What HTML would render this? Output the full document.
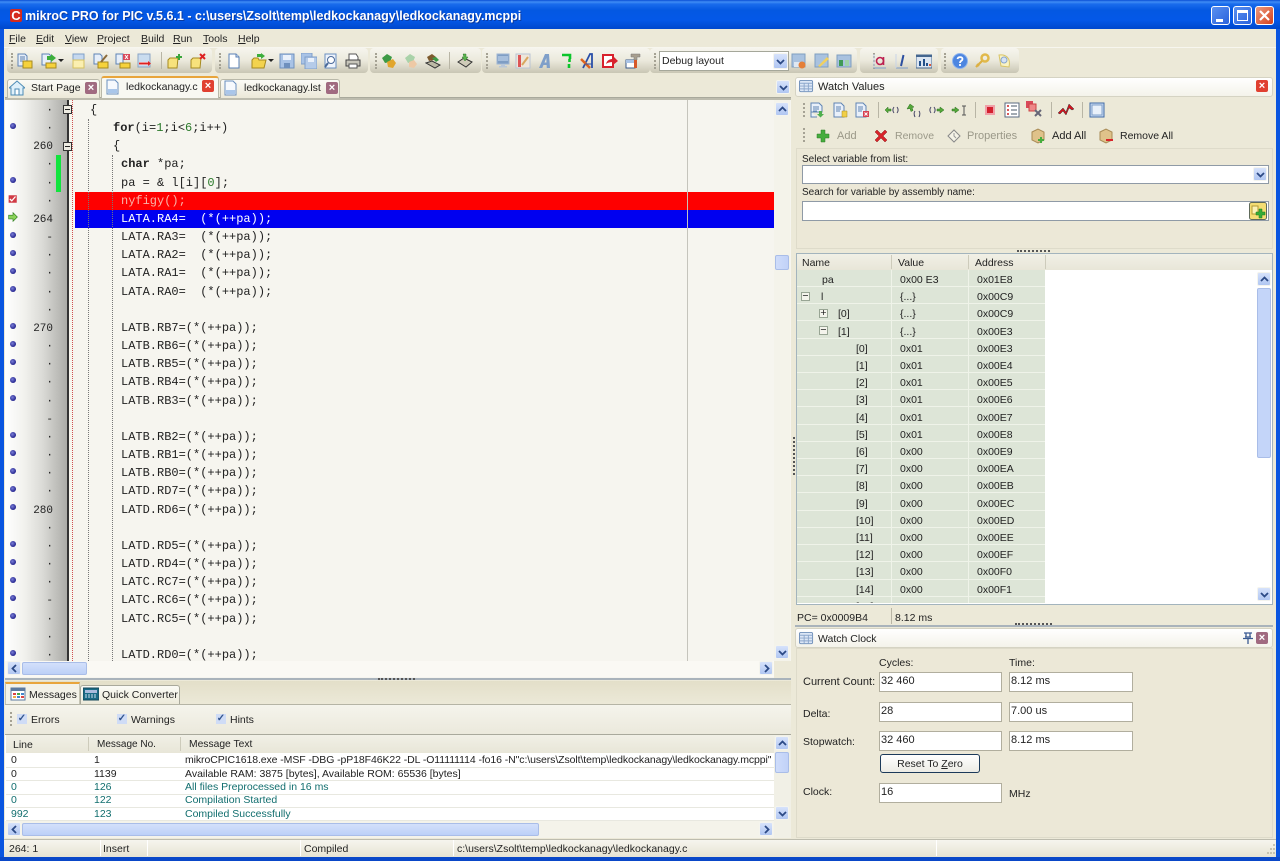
<!DOCTYPE html>
<html><head><meta charset="utf-8"><title>mikroC PRO for PIC</title>
<style>
html,body{margin:0;padding:0;width:1280px;height:861px;overflow:hidden;background:#ece9d8}
body{position:relative;font:10.5px/14px "Liberation Sans",sans-serif;color:#222}
div,span.t,svg.i{position:absolute}
.t{position:absolute;white-space:pre}
.tb{height:25px;top:48px;background:linear-gradient(#f6f5ee,#ebe9dc 50%,#c9c6b4);border-radius:4px}
.grip{width:2px;height:16px;border-left:2px dotted #a5a294}
.sep{width:1px;background:#b8b5a5}
svg.i{width:16px;height:16px}
.c{position:absolute;left:121px;height:18px;font:12px/18px "Liberation Mono",monospace;white-space:pre;color:#222}
.n{color:#2b7a2b}
.ln{position:absolute;font:11px/18px "Liberation Mono",monospace;color:#222;white-space:pre;text-align:right;width:30px;left:23px;margin-top:1px}
.bd{position:absolute;left:10px;width:6px;height:6px;border-radius:50%;background:radial-gradient(circle at 40% 40%,#7a7ed8,#24248e 70%)}
.sb{position:absolute;width:14px;height:14px;background:linear-gradient(#d6e2fb,#b0c6f2);border:1px solid #f4f4ee;box-sizing:border-box;border-radius:2px}
.sb svg{position:absolute;left:2px;top:2px;width:9px;height:9px}
.th{position:absolute;background:linear-gradient(90deg,#cfdcfa,#c1d2f8);border:1px solid #a9bde8;box-sizing:border-box;border-radius:2px}
.thh{position:absolute;background:linear-gradient(#d3e0fb,#bcd0f7);border:1px solid #a9bde8;box-sizing:border-box;border-radius:2px}
.tx{position:absolute;white-space:pre;line-height:16px;margin-top:1px}
.e{position:absolute;background:#fff;border:1px solid #b1ae9e;box-sizing:border-box;padding:0 1px;line-height:16px;font-size:11px;color:#222}
.m{position:absolute;height:13px;line-height:13px;white-space:pre}
.g{color:#116e6e}
.x{position:absolute;width:12px;height:12px;border-radius:2px;background:#d9495a;color:#fff;font:bold 11px/12px "Liberation Sans",sans-serif;text-align:center}
.f11{font-size:11px}
</style></head><body>
<svg width="0" height="0" style="position:absolute">
<defs>
<symbol id="up" viewBox="0 0 9 9"><path d="M1 6l3.5-3.5L8 6" fill="none" stroke="#2c4a86" stroke-width="1.8"/></symbol>
<symbol id="dn" viewBox="0 0 9 9"><path d="M1 3l3.5 3.5L8 3" fill="none" stroke="#2c4a86" stroke-width="1.8"/></symbol>
<symbol id="lf" viewBox="0 0 9 9"><path d="M6 1L2.500 4.500 6 8" fill="none" stroke="#2c4a86" stroke-width="1.8"/></symbol>
<symbol id="rt" viewBox="0 0 9 9"><path d="M3 1l3.500 3.500L3 8" fill="none" stroke="#2c4a86" stroke-width="1.800"/></symbol>
<symbol id="doc" viewBox="0 0 16 16"><path d="M2 1h8l3 3v11H2z" fill="#f6f9fd" stroke="#6a8fbf"/><path d="M3 10h9v4H3z" fill="#a9c6ea"/></symbol>
<symbol id="dy" viewBox="0 0 16 16"><path d="M1 1h7l2 2v10H1z" fill="#e6eef9" stroke="#5f84b5"/><path d="M3 4h5M3 6h5M3 8h5" stroke="#5a7fb0"/><path d="M6 8h9v7H6z" fill="#f6d23c" stroke="#a68a20"/></symbol>
<symbol id="dg" viewBox="0 0 16 16"><path d="M1 1h7l2 2v9H1z" fill="#e6eef9" stroke="#5f84b5"/><path d="M5 10h10v5H5z" fill="#f6d23c" stroke="#a68a20"/><path d="M6 3h4V1l5 4-5 4V7H6z" fill="#3cae3c"/></symbol>
<symbol id="dl" viewBox="0 0 16 16"><path d="M2 1h11v6H2z" fill="#c5d8ef" stroke="#7fa0c8"/><path d="M2 7h11v8H2z" fill="#fbefb0" stroke="#d6c060"/></symbol>
<symbol id="dc" viewBox="0 0 16 16"><path d="M1 1h6l2 2v8H1z" fill="#e6eef9" stroke="#5f84b5"/><path d="M5 9h10v6H5z" fill="#f6d23c" stroke="#a68a20"/><path d="M8 9l6-7" stroke="#8a6a3a" stroke-width="2"/></symbol>
<symbol id="dx" viewBox="0 0 16 16"><path d="M1 1h7v10H1z" fill="#e6eef9" stroke="#5f84b5"/><path d="M8 1h7v6H8z" fill="#d9495a"/><path d="M10 2l3 4m0-4l-3 4" stroke="#fff"/><path d="M5 10h10v5H5z" fill="#f6d23c" stroke="#a68a20"/></symbol>
<symbol id="ex" viewBox="0 0 16 16"><path d="M2 1h12v13H2z" fill="#c9dcef" stroke="#8aa5c5"/><path d="M3 9h10v3H3z" fill="#fff"/><path d="M3 10.500h9" stroke="#d22" stroke-width="2"/><path d="M12 8l3 2.500-3 2.500z" fill="#d22"/></symbol>
<symbol id="fa" viewBox="0 0 16 16"><path d="M1 7l2-2h8l-1 10H1z" fill="#f7e27c" stroke="#a68a20"/><path d="M12 1v6M9 4h6" stroke="#3aa63a" stroke-width="2"/></symbol>
<symbol id="fx" viewBox="0 0 16 16"><path d="M1 7l2-2h8l-1 10H1z" fill="#f7e27c" stroke="#a68a20"/><path d="M10 1l5 5m0-5l-5 5" stroke="#d22" stroke-width="2"/></symbol>
<symbol id="nw" viewBox="0 0 16 16"><path d="M3 1h7l3 3v11H3z" fill="#fff" stroke="#5a80b5"/><path d="M10 1v3h3" fill="#d5e2f3" stroke="#5a80b5"/></symbol>
<symbol id="op" viewBox="0 0 16 16"><path d="M1 7l2-2h4l1 2h7l-2 8H1z" fill="#f3d34e" stroke="#a68a20"/><path d="M6 1h4V0l4 3-4 3V4H6z" fill="#3cae3c"/></symbol>
<symbol id="sv" viewBox="0 0 16 16"><path d="M1 1h14v14H1z" fill="#a9c3e6" stroke="#6f90bd"/><path d="M4 2h8v5H4z" fill="#eaf1fb"/><path d="M5 10h6v5H5z" fill="#6f90bd"/></symbol>
<symbol id="sa" viewBox="0 0 16 16"><path d="M0 0h11v11H0z" fill="#a9c3e6" stroke="#7f9fc9"/><path d="M4 4h12v12H4z" fill="#b5cbe9" stroke="#7f9fc9"/><path d="M7 5h6v4H7z" fill="#eaf1fb"/></symbol>
<symbol id="pv" viewBox="0 0 16 16"><path d="M2 1h11v14H2z" fill="#eef3fb" stroke="#6a8fbf"/><circle cx="8" cy="7" r="3.500" fill="#fff" stroke="#4a6a9a"/><path d="M5 10l-3 4" stroke="#4a6a9a" stroke-width="2"/></symbol>
<symbol id="pr" viewBox="0 0 16 16"><path d="M4 1h7l2 3v3H4z" fill="#fff" stroke="#555"/><path d="M1 7h14v6H1z" fill="#c8c6bb" stroke="#444"/><path d="M4 11h8v4H4z" fill="#fff" stroke="#555"/></symbol>
<symbol id="bg" viewBox="0 0 16 16"><path d="M1 5l5-4 5 3-2 5-5 1z" fill="#3d9a45"/><path d="M6 9l6-3 3 4-3 5-5-1z" fill="#e1a62d"/></symbol>
<symbol id="bl" viewBox="0 0 16 16"><path d="M2 5l5-4 5 3-2 5-5 1z" fill="#a9d2a9"/><path d="M6 9l5-2 3 4-3 4-5-1z" fill="#eec9a5"/></symbol>
<symbol id="bc" viewBox="0 0 16 16"><path d="M2 4l5-3 4 3-2 3-5 1z" fill="#7d5a2d"/><path d="M7 5l4-1 3 3-3 2z" fill="#3d9a45"/><path d="M1 10l6-2 8 4-5 3z" fill="#bdb9a5" stroke="#333"/></symbol>
<symbol id="pg" viewBox="0 0 16 16"><path d="M1 9l6-4 8 4-6 5z" fill="#cfcbb8" stroke="#333"/><path d="M6 1h3v3h2l-3 4-3-4h2z" fill="#5ab44c" stroke="#2f7a2a" stroke-width=".5"/></symbol>
<symbol id="mn" viewBox="0 0 16 16"><path d="M2 1h12v10H2z" fill="#7f9ec4" stroke="#9fb6d4"/><path d="M3 3h10v5H3z" fill="#a7bfdc"/><path d="M6 11h4v2H6zM4 13h8v1.500H4z" fill="#b9c7d8"/></symbol>
<symbol id="lb" viewBox="0 0 16 16"><path d="M1 1h14v14H1z" fill="#eee6da" stroke="#b9c4d4"/><path d="M3 2h3v12H3z" fill="#d55"/><path d="M7 12l6-8" stroke="#d9a760" stroke-width="2"/></symbol>
<symbol id="aa" viewBox="0 0 16 16"><path d="M2 15L8 1h4l1 14H9.800l-.2-3H6.500l-1.300 3zM7.500 9.500h2L9.300 5z" fill="#7f9fc9"/></symbol>
<symbol id="gr" viewBox="0 0 16 16"><path d="M3 2h8v4M10.500 6v3M10 11v4" fill="none" stroke="#0cc52b" stroke-width="2.600"/></symbol>
<symbol id="ab" viewBox="0 0 16 16"><path d="M3 15L10 1h2v14" fill="none" stroke="#2a4fa8" stroke-width="1.800"/><path d="M1 6l9 9" stroke="#e0641e" stroke-width="2.500"/><path d="M5 11h7" stroke="#2a4fa8"/></symbol>
<symbol id="rd" viewBox="0 0 16 16"><path d="M1 2h10v12H1z" fill="#fff" stroke="#d8212c" stroke-width="2"/><path d="M4 11c1-4 4-5 7-5V3l5 5-5 4V9c-3 0-5 .500-7 2z" fill="#d8212c"/></symbol>
<symbol id="tl" viewBox="0 0 16 16"><path d="M1 7h9v8H1z" fill="#fff" stroke="#3a5a8a"/><path d="M1 7h9v3H1z" fill="#a9c3e6"/><path d="M6 1h9v3h-3v3h-3V4H6z" fill="#a89f8e" stroke="#777" stroke-width=".5"/><path d="M9 7h3v8H9z" fill="#d6582a"/></symbol>
<symbol id="w1" viewBox="0 0 16 16"><path d="M1 1h13v13H1z" fill="#a9c2df" stroke="#7f9fc0"/><path d="M3 9h6v5H3z" fill="#dfe8f2"/><circle cx="11" cy="12" r="3.500" fill="#e47f37"/></symbol>
<symbol id="w2" viewBox="0 0 16 16"><path d="M1 1h13v13H1z" fill="#a9c2df" stroke="#7f9fc0"/><path d="M4 13l9-9 2 2-9 8z" fill="#f0d060"/></symbol>
<symbol id="w3" viewBox="0 0 16 16"><path d="M1 2h14v12H1z" fill="#a9c2df" stroke="#7f9fc0"/><path d="M3 7h4v6H3z" fill="#3f9a55"/><path d="M9 7h4v6H9z" fill="#9fd3a9"/></symbol>
<symbol id="ta" viewBox="0 0 16 16"><path d="M2 15h12" stroke="#7f9fc9"/><path d="M2 1v14" stroke="#c8d4e8"/><circle cx="8" cy="8" r="3.500" fill="none" stroke="#bd2050" stroke-width="1.600"/><path d="M11.500 4v8" stroke="#bd2050" stroke-width="1.600"/></symbol>
<symbol id="tk" viewBox="0 0 16 16"><path d="M2 15h12" stroke="#7f9fc9"/><path d="M2 1v14" stroke="#c8d4e8"/><path d="M7 13l2.500-11" stroke="#2c4fa0" stroke-width="2"/></symbol>
<symbol id="tc" viewBox="0 0 16 16"><path d="M0 2h16v13H0z" fill="#dce6f2" stroke="#44668f"/><path d="M0 2h16v2H0z" fill="#44668f"/><path d="M3 8h2v5H3zM7 6h2v7H7zM10 10h2v3h-2z" fill="#23508a"/><path d="M13 11h2v2h-2z" fill="#d95a3a"/></symbol>
<symbol id="hp" viewBox="0 0 16 16"><circle cx="8" cy="8" r="7.500" fill="#4d86e0" stroke="#8fb5ee"/><path d="M5.500 6c.5-2.500 5-2.500 5 0 0 2-2.500 1.500-2.500 4M8 11v2" fill="none" stroke="#fff" stroke-width="1.800"/></symbol>
<symbol id="ky" viewBox="0 0 16 16"><circle cx="11" cy="5" r="3.500" fill="none" stroke="#e1b94a" stroke-width="2.500"/><path d="M8 8l-6 6M3 11l2 2" stroke="#dcb043" stroke-width="2.200"/></symbol>
<symbol id="ab2" viewBox="0 0 16 16"><path d="M3 2c7-1 12 3 10 12l-8-1z" fill="#faf3c3" stroke="#d8c568"/><circle cx="8" cy="7" r="3" fill="#d5e3f5" stroke="#87a4cc"/></symbol>
<symbol id="wt" viewBox="0 0 16 16"><rect x=".5" y="1.500" width="14" height="12" rx="1.500" fill="#dce7f6" stroke="#6f8fb9"/><path d="M1 4.500h13M1 7.500h13M1 10.500h13M5.500 4.500v9M10 4.500v9" stroke="#8ca7cb"/></symbol>
<symbol id="v1" viewBox="0 0 16 16"><path d="M2 1h8l3 3v6H2zM2 10v5h6" fill="#e9f0fa" stroke="#5f84b3"/><path d="M4 5h6M4 7h6M4 9h4" stroke="#5f84b3"/><path d="M10 9h3v3h2l-3.500 3.500L8 12h2z" fill="#4fae4f"/></symbol>
<symbol id="v2" viewBox="0 0 16 16"><path d="M2 1h7l3 3v11H2z" fill="#e9f0fa" stroke="#5f84b3"/><path d="M4 5h5M4 7h5M4 9h4" stroke="#5f84b3"/><path d="M10 9h5v6h-5z" fill="#f1cf47" stroke="#a68a20" stroke-width=".5"/></symbol>
<symbol id="v3" viewBox="0 0 16 16"><path d="M2 1h7l3 3v11H2z" fill="#e9f0fa" stroke="#5f84b3"/><path d="M4 5h5M4 7h5M4 9h4" stroke="#5f84b3"/><path d="M9 9h6v6H9z" fill="#d64050"/><path d="M10.500 10.500l3 3m0-3l-3 3" stroke="#fff"/></symbol>
<symbol id="s1" viewBox="0 0 16 16"><path d="M1 8l3-3v2h3v2H4v2z" fill="#55a83a" stroke="#2b6f1e" stroke-width=".5"/><path d="M10 5c-1.500 2-1.500 4 0 6M13 5c1.500 2 1.500 4 0 6" fill="none" stroke="#446"/></symbol>
<symbol id="s2" viewBox="0 0 16 16"><path d="M1 7l3-5 4 3-2 .500 1 3-2 1-1-3z" fill="#55a83a" stroke="#2b6f1e" stroke-width=".5"/><path d="M9 9c-1.500 2-1 4 0 6M13 9c1.500 2 1 4 0 6" fill="none" stroke="#446"/></symbol>
<symbol id="s3" viewBox="0 0 16 16"><path d="M2 5c-1.500 2-1.500 4 0 6M5 5c1.500 2 1.500 4 0 6" fill="none" stroke="#446"/><path d="M8 7h3V5l4 3-4 3V9H8z" fill="#55a83a" stroke="#2b6f1e" stroke-width=".5"/></symbol>
<symbol id="s4" viewBox="0 0 16 16"><path d="M1 7h3V5l4 3-4 3V9H1z" fill="#55a83a" stroke="#2b6f1e" stroke-width=".5"/><path d="M11 4h4M13 4v9M11 13h4" fill="none" stroke="#555"/></symbol>
<symbol id="st" viewBox="0 0 16 16"><path d="M3 3h10v10H3z" fill="#f0a0a8"/><path d="M5 5h6v6H5z" fill="#d4202f"/></symbol>
<symbol id="ls" viewBox="0 0 16 16"><path d="M1 1h14v14H1z" fill="#fff" stroke="#5a6a80"/><path d="M3 4h2M3 8h2M3 12h2" stroke="#c22" stroke-width="1.500"/><path d="M7 4h6M7 8h6M7 12h6" stroke="#456"/></symbol>
<symbol id="rx" viewBox="0 0 16 16"><path d="M0 0h7v7H0z" fill="#d9495a"/><path d="M3 3h7v7H3z" fill="#e88" stroke="#c44"/><path d="M9 9l6 6m0-6l-6 6" stroke="#667" stroke-width="2"/></symbol>
<symbol id="rj" viewBox="0 0 18 16"><path d="M1 11l5-5 3 4 3-8 5 5-2 1-3-2-3 7-3-4-3 3z" fill="#d4111d" stroke="#333" stroke-width=".5"/></symbol>
<symbol id="bx" viewBox="0 0 16 16"><path d="M1 1h14v14H1z" fill="#c9dbf2" stroke="#3f6aa6"/><path d="M3 3h10v10H3z" fill="#e8f0fa" stroke="#7f9fc9"/></symbol>
<symbol id="pl" viewBox="0 0 16 16"><path d="M6 2h4v4h4v4h-4v4H6v-4H2V6h4z" fill="#46ad3e" stroke="#2b7a25" stroke-width=".5"/></symbol>
<symbol id="xx" viewBox="0 0 16 16"><path d="M2 4l2-2 4 4 4-4 2 2-4 4 4 4-2 2-4-4-4 4-2-2 4-4z" fill="#d8232a" stroke="#8c1a1a" stroke-width=".5"/></symbol>
<symbol id="pp" viewBox="0 0 16 16"><path d="M2 8l6-6 6 6-6 6z" fill="#f5f3e7" stroke="#888"/><path d="M8 5v3l2 2" stroke="#999" fill="none"/></symbol>
<symbol id="bxa" viewBox="0 0 16 16"><path d="M2 4l6-3 6 3v8l-6 3-6-3z" fill="#dfc28a" stroke="#a88a55"/><path d="M10 9h2v2h2v2h-2v2h-2v-2H8v-2h2z" fill="#46ad3e"/></symbol>
<symbol id="bxr" viewBox="0 0 16 16"><path d="M2 4l6-3 6 3v8l-6 3-6-3z" fill="#dfc28a" stroke="#a88a55"/><path d="M8 11h7v2H8z" fill="#d8232a"/></symbol>
<symbol id="hm" viewBox="0 0 16 16"><path d="M0 8l8-7 8 7h-2v7H2V8z" fill="#dff0fa" stroke="#4d8bb5"/><path d="M6 9h4v6H6z" fill="#fff" stroke="#4d8bb5"/></symbol>
<symbol id="qc" viewBox="0 0 16 16"><path d="M0 2h16v12H0z" fill="#1a6b86" stroke="#16475a"/><path d="M2 4h12v3H2z" fill="#abd"/><path d="M2 9h12M2 11h12" stroke="#cde" stroke-dasharray="2 1"/></symbol>
<symbol id="ms" viewBox="0 0 16 16"><path d="M1 2h14v12H1z" fill="#fff" stroke="#5c7a9f"/><path d="M1 2h14v3H1z" fill="#5c7a9f"/><path d="M3 7h3v2H3z" fill="#d44"/><path d="M7 7h3v2H7z" fill="#4a4"/><path d="M11 7h3v2h-3z" fill="#48c"/><path d="M3 10h3v2H3z" fill="#ea4"/><path d="M7 10h3v2H7z" fill="#48c"/><path d="M11 10h3v2h-3z" fill="#d44"/></symbol>
<symbol id="yb" viewBox="0 0 18 18"><rect x=".5" y=".5" width="17" height="17" rx="2" fill="#f4dd74" stroke="#5f6a5a"/><path d="M3 4h6v8H3z" fill="#fbf2b5" stroke="#b39a35"/><path d="M10 7h3v3h3v3h-3v3h-3v-3H7v-3h3z" fill="#36ac36" stroke="#1f7a1f" stroke-width=".5"/></symbol>
<symbol id="pn" viewBox="0 0 12 12"><path d="M2 1h8M3 5h6M1 6.500h10M6 6.500V12M4 1v4.500M8 1v4.500" fill="none" stroke="#3a5a92" stroke-width="1.300"/></symbol>
<symbol id="chk" viewBox="0 0 16 16"><path d="M1 2h13v12H1z" fill="#d13b45"/><path d="M3 8l3 3 6-7" fill="none" stroke="#fff" stroke-width="2"/></symbol>
<symbol id="arr" viewBox="0 0 16 16"><path d="M1 5h7V1l7 7-7 7v-4H1z" fill="#8bd25a" stroke="#2e7d1e"/></symbol>
</defs></svg>

<!-- window frame -->
<div style="left:0;top:0;width:1280px;height:29px;background:linear-gradient(#0a4fd5,#3f8df5 2px,#1a6cec 4px,#0458e2 10px,#0458e8 20px,#0049cf 28px)"></div>
<div style="left:0;top:29px;width:4px;height:828px;background:#0a55e0"></div>
<div style="left:1276px;top:29px;width:4px;height:828px;background:#0a55e0"></div>
<div style="left:0;top:857px;width:1280px;height:4px;background:#0a48c8"></div>
<div style="left:10px;top:9px;width:12px;height:13px;background:#d42a1e;color:#fff;font:bold 13px/13px 'Liberation Sans',sans-serif;text-align:center;border-radius:2px">C</div>
<span class="t" style="left:25px;top:9px;color:#fff;font:bold 12.5px/15px 'Liberation Sans',sans-serif;text-shadow:1px 1px 0 #0a3aa0">mikroC PRO for PIC v.5.6.1 - c:\users\Zsolt\temp\ledkockanagy\ledkockanagy.mcppi</span>
<div style="left:1211px;top:6px;width:19px;height:19px;box-sizing:border-box;border:1px solid #fff;border-radius:3px;background:linear-gradient(135deg,#5a90f0,#2a62dc)"><div style="left:4px;top:12px;width:7px;height:3px;background:#fff"></div></div>
<div style="left:1233px;top:6px;width:19px;height:19px;box-sizing:border-box;border:1px solid #fff;border-radius:3px;background:linear-gradient(135deg,#5a90f0,#2a62dc)"><div style="left:3px;top:3px;width:11px;height:11px;box-sizing:border-box;border:1px solid #fff;border-top-width:3px"></div></div>
<div style="left:1255px;top:6px;width:19px;height:19px;box-sizing:border-box;border:1px solid #fff;border-radius:3px;background:linear-gradient(135deg,#ec9a7e,#d5401c)"><svg style="position:absolute;left:3px;top:3px" width="11" height="11"><path d="M1 1l9 9m0-9l-9 9" stroke="#fff" stroke-width="2.200"/></svg></div>

<!-- menu -->
<span class="t" style="left:9px;top:32px"><u>F</u>ile</span>
<span class="t" style="left:36px;top:32px"><u>E</u>dit</span>
<span class="t" style="left:65px;top:32px"><u>V</u>iew</span>
<span class="t" style="left:97px;top:32px"><u>P</u>roject</span>
<span class="t" style="left:141px;top:32px"><u>B</u>uild</span>
<span class="t" style="left:173px;top:32px"><u>R</u>un</span>
<span class="t" style="left:203px;top:32px"><u>T</u>ools</span>
<span class="t" style="left:238px;top:32px"><u>H</u>elp</span>

<!-- toolbars -->
<div style="left:4px;top:47px;width:1272px;height:1px;background:#f7f6ef"></div>
<div class="tb" style="left:7px;width:205px"></div>
<div class="tb" style="left:215px;width:153px"></div>
<div class="tb" style="left:370px;width:111px"></div>
<div class="tb" style="left:482px;width:168px"></div>
<div class="tb" style="left:650px;width:207px"></div>
<div class="tb" style="left:860px;width:78px"></div>
<div class="tb" style="left:941px;width:78px"></div>
<div class="grip" style="left:11px;top:53px"></div><div class="grip" style="left:219px;top:53px"></div><div class="grip" style="left:375px;top:53px"></div><div class="grip" style="left:486px;top:53px"></div><div class="grip" style="left:654px;top:53px"></div><div class="grip" style="left:873px;top:53px"></div><div class="grip" style="left:944px;top:53px"></div>
<div class="sep" style="left:161px;top:52px;height:17px"></div><div class="sep" style="left:449px;top:52px;height:17px"></div>
<svg class="i" style="left:17px;top:53px"><use href="#dy"/></svg>
<svg class="i" style="left:41px;top:53px"><use href="#dg"/></svg><svg style="position:absolute;left:58px;top:59px" width="6" height="4"><path d="M0 0h6L3 3z" fill="#222"/></svg>
<svg class="i" style="left:71px;top:53px"><use href="#dl"/></svg>
<svg class="i" style="left:93px;top:53px"><use href="#dc"/></svg>
<svg class="i" style="left:115px;top:53px"><use href="#dx"/></svg>
<svg class="i" style="left:136px;top:53px"><use href="#ex"/></svg>
<svg class="i" style="left:167px;top:53px"><use href="#fa"/></svg>
<svg class="i" style="left:190px;top:53px"><use href="#fx"/></svg>
<svg class="i" style="left:226px;top:53px"><use href="#nw"/></svg>
<svg class="i" style="left:251px;top:53px"><use href="#op"/></svg><svg style="position:absolute;left:268px;top:59px" width="6" height="4"><path d="M0 0h6L3 3z" fill="#222"/></svg>
<svg class="i" style="left:279px;top:53px"><use href="#sv"/></svg>
<svg class="i" style="left:301px;top:53px"><use href="#sa"/></svg>
<svg class="i" style="left:323px;top:53px"><use href="#pv"/></svg>
<svg class="i" style="left:345px;top:53px"><use href="#pr"/></svg>
<svg class="i" style="left:381px;top:53px"><use href="#bg"/></svg>
<svg class="i" style="left:403px;top:53px"><use href="#bl"/></svg>
<svg class="i" style="left:425px;top:53px"><use href="#bc"/></svg>
<svg class="i" style="left:457px;top:53px"><use href="#pg"/></svg>
<svg class="i" style="left:495px;top:53px"><use href="#mn"/></svg>
<svg class="i" style="left:515px;top:53px"><use href="#lb"/></svg>
<svg class="i" style="left:537px;top:53px"><use href="#aa"/></svg>
<svg class="i" style="left:559px;top:53px"><use href="#gr"/></svg>
<svg class="i" style="left:580px;top:53px"><use href="#ab"/></svg>
<svg class="i" style="left:602px;top:53px"><use href="#rd"/></svg>
<svg class="i" style="left:625px;top:53px"><use href="#tl"/></svg>
<div style="left:659px;top:51px;width:130px;height:20px;background:#fff;border:1px solid #a5a79a;box-sizing:border-box"><span class="t" style="left:2px;top:2px">Debug layout</span></div>
<div class="sb" style="left:773px;top:53px;height:16px;width:15px"><svg style="top:3px"><use href="#dn"/></svg></div>
<svg class="i" style="left:791px;top:53px"><use href="#w1"/></svg>
<svg class="i" style="left:814px;top:53px"><use href="#w2"/></svg>
<svg class="i" style="left:836px;top:53px"><use href="#w3"/></svg>
<svg class="i" style="left:872px;top:53px"><use href="#ta"/></svg>
<svg class="i" style="left:894px;top:53px"><use href="#tk"/></svg>
<svg class="i" style="left:916px;top:53px"><use href="#tc"/></svg>
<svg class="i" style="left:952px;top:53px"><use href="#hp"/></svg>
<svg class="i" style="left:974px;top:53px"><use href="#ky"/></svg>
<svg class="i" style="left:996px;top:53px"><use href="#ab2"/></svg>

<!-- tabs -->
<div style="left:5px;top:97px;width:786px;height:1px;background:#a9a99c"></div>
<div style="left:7px;top:79px;width:93px;height:19px;background:linear-gradient(#fbfbf6,#ece9d8);border:1px solid #b9b8a9;border-bottom:0;box-sizing:border-box;border-radius:3px 3px 0 0"></div>
<svg class="i" style="left:9px;top:80px"><use href="#hm"/></svg>
<span class="t" style="left:31px;top:81px">Start Page</span>
<div class="x" style="left:85px;top:82px;background:#a06a80">×</div>
<div style="left:220px;top:79px;width:120px;height:19px;background:linear-gradient(#fbfbf6,#ece9d8);border:1px solid #b9b8a9;border-bottom:0;box-sizing:border-box;border-radius:3px 3px 0 0"></div>
<svg class="i" style="left:223px;top:80px"><use href="#doc"/></svg>
<span class="t" style="left:244px;top:81px">ledkockanagy.lst</span>
<div class="x" style="left:326px;top:82px;background:#a06a80">×</div>
<div style="left:101px;top:76px;width:118px;height:23px;background:#f8f8f2;border:1px solid #b9b8a9;border-top:2px solid #e8a53c;border-bottom:0;box-sizing:border-box;border-radius:3px 3px 0 0"></div>
<svg class="i" style="left:105px;top:79px"><use href="#doc"/></svg>
<span class="t" style="left:126px;top:80px">ledkockanagy.c</span>
<div class="x" style="left:202px;top:80px;background:#e04030">×</div>
<div class="sb" style="left:776px;top:80px"><svg><use href="#dn"/></svg></div>

<!-- editor -->
<div style="left:5px;top:98px;width:786px;height:581px;background:#f6f5ef"></div>
<div style="left:5px;top:100px;width:63px;height:561px;background:linear-gradient(90deg,#fff,#f2f2ee 30%,#dadad6 60%,#a9a9a5)"></div>
<div style="left:67px;top:100px;width:2px;height:561px;background:#333"></div>
<div style="left:69px;top:100px;width:3px;height:561px;background:#f8f6ee"></div>
<div style="left:72px;top:100px;width:1px;height:561px;border-left:1px dotted #d05050"></div>
<div style="left:5px;top:98px;width:786px;height:2px;background:#bdbcae"></div>
<div style="left:75px;top:192px;width:699px;height:18px;background:#fe0000"></div>
<div style="left:75px;top:210px;width:699px;height:18px;background:#0000f0"></div>
<div style="left:687px;top:100px;width:1px;height:561px;background:#c5c4bc"></div>
<div style="left:88px;top:119px;width:0;height:542px;border-left:1px dotted #777"></div>
<div style="left:112px;top:155px;width:0;height:506px;border-left:1px dotted #777"></div>
<div style="left:56px;top:155px;width:5px;height:37px;background:#11e43d"></div>
<div style="left:63px;top:105px;width:9px;height:9px;background:#eeece2;border:1px solid #333;box-sizing:border-box"><div style="left:1px;top:3px;width:5px;height:1px;background:#222"></div></div>
<div style="left:63px;top:142px;width:9px;height:9px;background:#eeece2;border:1px solid #333;box-sizing:border-box"><div style="left:1px;top:3px;width:5px;height:1px;background:#222"></div></div>
<div class="bd" style="top:123px"></div><div class="bd" style="top:177px"></div><div class="bd" style="top:232px"></div><div class="bd" style="top:250px"></div><div class="bd" style="top:268px"></div><div class="bd" style="top:286px"></div><div class="bd" style="top:323px"></div><div class="bd" style="top:341px"></div><div class="bd" style="top:359px"></div><div class="bd" style="top:377px"></div><div class="bd" style="top:395px"></div><div class="bd" style="top:432px"></div><div class="bd" style="top:450px"></div><div class="bd" style="top:468px"></div><div class="bd" style="top:486px"></div><div class="bd" style="top:504px"></div><div class="bd" style="top:541px"></div><div class="bd" style="top:559px"></div><div class="bd" style="top:577px"></div><div class="bd" style="top:595px"></div><div class="bd" style="top:613px"></div><div class="bd" style="top:650px"></div>
<svg style="position:absolute;left:8px;top:194px" width="10" height="10"><use href="#chk"/></svg>
<svg style="position:absolute;left:8px;top:212px" width="10" height="10"><use href="#arr"/></svg>
<span class="ln" style="top:101px">·</span><span class="ln" style="top:119px">·</span><span class="ln" style="top:137px">260</span><span class="ln" style="top:155px">·</span><span class="ln" style="top:174px">·</span><span class="ln" style="top:192px">·</span><span class="ln" style="top:210px">264</span><span class="ln" style="top:228px">-</span><span class="ln" style="top:246px">·</span><span class="ln" style="top:264px">·</span><span class="ln" style="top:283px">·</span><span class="ln" style="top:301px">·</span><span class="ln" style="top:319px">270</span><span class="ln" style="top:337px">·</span><span class="ln" style="top:355px">·</span><span class="ln" style="top:373px">·</span><span class="ln" style="top:392px">·</span><span class="ln" style="top:410px">-</span><span class="ln" style="top:428px">·</span><span class="ln" style="top:446px">·</span><span class="ln" style="top:464px">·</span><span class="ln" style="top:482px">·</span><span class="ln" style="top:501px">280</span><span class="ln" style="top:519px">·</span><span class="ln" style="top:537px">·</span><span class="ln" style="top:555px">·</span><span class="ln" style="top:573px">·</span><span class="ln" style="top:591px">-</span><span class="ln" style="top:610px">·</span><span class="ln" style="top:628px">·</span><span class="ln" style="top:646px">·</span>
<span class="c" style="left:90px;top:101px">{</span>
<span class="c" style="left:113px;top:119px"><b>for</b>(i=<span class="n">1</span>;i&lt;<span class="n">6</span>;i++)</span>
<span class="c" style="left:113px;top:137px">{</span>
<span class="c" style="top:155px"><b>char</b> *pa;</span>
<span class="c" style="top:174px">pa = &amp; l[i][<span class="n">0</span>];</span>
<span class="c" style="top:192px;color:#f8b4a8">nyfigy();</span>
<span class="c" style="top:210px;color:#fff">LATA.RA4=  (*(++pa));</span>
<span class="c" style="top:228px">LATA.RA3=  (*(++pa));</span>
<span class="c" style="top:246px">LATA.RA2=  (*(++pa));</span>
<span class="c" style="top:264px">LATA.RA1=  (*(++pa));</span>
<span class="c" style="top:283px">LATA.RA0=  (*(++pa));</span>
<span class="c" style="top:319px">LATB.RB7=(*(++pa));</span>
<span class="c" style="top:337px">LATB.RB6=(*(++pa));</span>
<span class="c" style="top:355px">LATB.RB5=(*(++pa));</span>
<span class="c" style="top:373px">LATB.RB4=(*(++pa));</span>
<span class="c" style="top:392px">LATB.RB3=(*(++pa));</span>
<span class="c" style="top:428px">LATB.RB2=(*(++pa));</span>
<span class="c" style="top:446px">LATB.RB1=(*(++pa));</span>
<span class="c" style="top:464px">LATB.RB0=(*(++pa));</span>
<span class="c" style="top:482px">LATD.RD7=(*(++pa));</span>
<span class="c" style="top:501px">LATD.RD6=(*(++pa));</span>
<span class="c" style="top:537px">LATD.RD5=(*(++pa));</span>
<span class="c" style="top:555px">LATD.RD4=(*(++pa));</span>
<span class="c" style="top:573px">LATC.RC7=(*(++pa));</span>
<span class="c" style="top:591px">LATC.RC6=(*(++pa));</span>
<span class="c" style="top:610px">LATC.RC5=(*(++pa));</span>
<span class="c" style="top:646px">LATD.RD0=(*(++pa));</span>
<!-- editor scrollbars -->
<div style="left:774px;top:100px;width:16px;height:561px;background:#f4f3ea"></div>
<div class="sb" style="left:775px;top:102px"><svg><use href="#up"/></svg></div>
<div class="th" style="left:775px;top:255px;width:14px;height:15px"></div>
<div class="sb" style="left:775px;top:645px"><svg><use href="#dn"/></svg></div>
<div style="left:5px;top:661px;width:769px;height:16px;background:#faf9f4"></div>
<div style="left:774px;top:661px;width:17px;height:17px;background:#ece9d8"></div>
<div class="sb" style="left:7px;top:661px"><svg><use href="#lf"/></svg></div>
<div class="thh" style="left:22px;top:662px;width:65px;height:13px"></div>
<div class="sb" style="left:759px;top:661px"><svg><use href="#rt"/></svg></div>
<div style="left:5px;top:678px;width:786px;height:2px;background:#a9b3bb"></div>
<div style="left:378px;top:678px;width:37px;height:2px;border-top:2px dotted #555;box-sizing:border-box"></div>
<!-- splitter right of editor -->
<div style="left:792px;top:100px;width:2px;height:738px;background:#ece9d8"></div>
<div style="left:793px;top:437px;width:2px;height:38px;border-left:2px dotted #555;box-sizing:border-box"></div>

<!-- bottom panel -->
<div style="left:5px;top:681px;width:786px;height:24px;background:linear-gradient(#e3dfc9,#ece9d8)"></div>
<div style="left:5px;top:682px;width:75px;height:23px;background:#f3f2e8;border:1px solid #c5c4b4;border-top:2px solid #e8a53c;box-sizing:border-box;border-bottom:0"></div>
<svg class="i" style="left:10px;top:686px"><use href="#ms"/></svg>
<span class="t" style="left:29px;top:688px">Messages</span>
<div style="left:80px;top:685px;width:100px;height:20px;background:linear-gradient(#fbfbf6,#ece9d8);border:1px solid #a9a99c;border-bottom:0;box-sizing:border-box;border-radius:3px 3px 0 0"></div>
<svg class="i" style="left:83px;top:686px"><use href="#qc"/></svg>
<span class="t" style="left:102px;top:688px">Quick Converter</span>
<div style="left:5px;top:704px;width:786px;height:30px;background:linear-gradient(#f5f4ec,#ebe9dc);border-top:1px solid #b5b4a5;box-sizing:border-box"></div>
<div class="grip" style="left:10px;top:712px;height:14px"></div>
<div style="left:17px;top:714px;width:10px;height:10px;background:#cfdcf6;color:#33558f;font:bold 10px/10px 'Liberation Sans',sans-serif;text-align:center">✓</div>
<span class="t" style="left:31px;top:713px">Errors</span>
<div style="left:117px;top:714px;width:10px;height:10px;background:#cfdcf6;color:#33558f;font:bold 10px/10px 'Liberation Sans',sans-serif;text-align:center">✓</div>
<span class="t" style="left:131px;top:713px">Warnings</span>
<div style="left:216px;top:714px;width:10px;height:10px;background:#cfdcf6;color:#33558f;font:bold 10px/10px 'Liberation Sans',sans-serif;text-align:center">✓</div>
<span class="t" style="left:230px;top:713px">Hints</span>
<div style="left:5px;top:734px;width:786px;height:104px;background:#fff;border-top:1px solid #a9a99c;box-sizing:border-box"></div>
<div style="left:6px;top:735px;width:768px;height:18px;background:linear-gradient(#f1f0e6,#e8e6d8)"></div>
<div style="left:88px;top:737px;width:1px;height:14px;background:#cdcbbb"></div>
<div style="left:180px;top:737px;width:1px;height:14px;background:#cdcbbb"></div>
<span class="t" style="left:13px;top:738px">Line</span><span class="t" style="left:97px;top:738px;font-size:10px">Message No.</span><span class="t" style="left:189px;top:738px;font-size:10.3px">Message Text</span>
<div style="left:6px;top:767px;width:768px;height:1px;background:#e8e8e0"></div><div style="left:6px;top:780px;width:768px;height:1px;background:#e8e8e0"></div><div style="left:6px;top:794px;width:768px;height:1px;background:#e8e8e0"></div><div style="left:6px;top:807px;width:768px;height:1px;background:#e8e8e0"></div><div style="left:6px;top:820px;width:768px;height:1px;background:#e8e8e0"></div>
<span class="m" style="left:11px;top:754px">0</span><span class="m" style="left:94px;top:754px">1</span><span class="m" style="left:185px;top:754px;letter-spacing:-.09px">mikroCPIC1618.exe -MSF -DBG -pP18F46K22 -DL -O11111114 -fo16 -N"c:\users\Zsolt\temp\ledkockanagy\ledkockanagy.mcppi"</span>
<span class="m" style="left:11px;top:768px">0</span><span class="m" style="left:94px;top:768px">1139</span><span class="m" style="left:185px;top:768px">Available RAM: 3875 [bytes], Available ROM: 65536 [bytes]</span>
<span class="m g" style="left:11px;top:781px">0</span><span class="m g" style="left:94px;top:781px">126</span><span class="m g" style="left:185px;top:781px">All files Preprocessed in 16 ms</span>
<span class="m g" style="left:11px;top:794px">0</span><span class="m g" style="left:94px;top:794px">122</span><span class="m g" style="left:185px;top:794px">Compilation Started</span>
<span class="m g" style="left:11px;top:808px">992</span><span class="m g" style="left:94px;top:808px">123</span><span class="m g" style="left:185px;top:808px">Compiled Successfully</span>
<div style="left:774px;top:735px;width:17px;height:103px;background:#f1f0e6"></div>
<div class="sb" style="left:775px;top:736px"><svg><use href="#up"/></svg></div>
<div class="th" style="left:775px;top:752px;width:14px;height:21px"></div>
<div class="sb" style="left:775px;top:806px"><svg><use href="#dn"/></svg></div>
<div style="left:5px;top:821px;width:769px;height:17px;background:#f4f3ea"></div>
<div class="sb" style="left:7px;top:822px"><svg><use href="#lf"/></svg></div>
<div class="thh" style="left:22px;top:823px;width:517px;height:13px"></div>
<div class="sb" style="left:759px;top:822px"><svg><use href="#rt"/></svg></div>

<!-- right: watch values -->
<div style="left:795px;top:77px;width:478px;height:20px;background:linear-gradient(#fff,#f4f3ea);border:1px solid #d5d3c3;box-sizing:border-box;border-radius:3px"></div>
<svg class="i" style="left:799px;top:79px;width:15px;height:15px"><use href="#wt"/></svg>
<span class="t f11" style="left:818px;top:80px">Watch Values</span>
<div class="x" style="left:1256px;top:80px;background:#e04030">×</div>
<div class="grip" style="left:803px;top:103px;height:14px"></div>
<svg class="i" style="left:809px;top:102px"><use href="#v1"/></svg>
<svg class="i" style="left:832px;top:102px"><use href="#v2"/></svg>
<svg class="i" style="left:854px;top:102px"><use href="#v3"/></svg>
<div class="sep" style="left:878px;top:102px;height:16px"></div>
<svg class="i" style="left:884px;top:102px"><use href="#s1"/></svg>
<svg class="i" style="left:906px;top:102px"><use href="#s2"/></svg>
<svg class="i" style="left:929px;top:102px"><use href="#s3"/></svg>
<svg class="i" style="left:951px;top:102px"><use href="#s4"/></svg>
<div class="sep" style="left:975px;top:102px;height:16px"></div>
<svg class="i" style="left:982px;top:102px"><use href="#st"/></svg>
<svg class="i" style="left:1004px;top:102px"><use href="#ls"/></svg>
<svg class="i" style="left:1026px;top:101px"><use href="#rx"/></svg>
<div class="sep" style="left:1051px;top:102px;height:16px"></div>
<svg style="position:absolute;left:1057px;top:102px" width="18" height="16"><use href="#rj"/></svg>
<div class="sep" style="left:1082px;top:102px;height:16px"></div>
<svg class="i" style="left:1089px;top:102px"><use href="#bx"/></svg>
<div class="grip" style="left:803px;top:128px;height:14px"></div>
<svg class="i" style="left:815px;top:128px"><use href="#pl"/></svg><span class="t f11" style="left:837px;top:129px;color:#9a9888">Add</span>
<svg class="i" style="left:873px;top:128px"><use href="#xx"/></svg><span class="t" style="left:895px;top:129px;color:#9a9888">Remove</span>
<svg class="i" style="left:946px;top:128px"><use href="#pp"/></svg><span class="t f11" style="left:967px;top:129px;color:#9a9888">Properties</span>
<svg class="i" style="left:1030px;top:128px"><use href="#bxa"/></svg><span class="t f11" style="left:1052px;top:129px">Add All</span>
<svg class="i" style="left:1098px;top:128px"><use href="#bxr"/></svg><span class="t" style="left:1120px;top:129px">Remove All</span>
<div style="left:796px;top:148px;width:477px;height:101px;background:#ece8d7;border:1px solid #dedbca;box-sizing:border-box"></div>
<span class="t" style="left:802px;top:153px;font-size:10px">Select variable from list:</span>
<div class="e" style="left:802px;top:165px;width:467px;height:19px;border-color:#8f9aa6"></div>
<div class="sb" style="left:1253px;top:167px"><svg><use href="#dn"/></svg></div>
<span class="t" style="left:802px;top:186px;font-size:10px">Search for variable by assembly name:</span>
<div class="e" style="left:802px;top:201px;width:467px;height:20px;border-color:#8f9aa6"></div>
<svg style="position:absolute;left:1249px;top:202px" width="18" height="18"><use href="#yb"/></svg>
<div style="left:1017px;top:250px;width:33px;height:2px;border-top:2px dotted #555;box-sizing:border-box"></div>
<!-- watch table -->
<div style="left:796px;top:253px;width:477px;height:352px;background:#fff;border:1px solid #a3b4bd;box-sizing:border-box"></div>
<div style="left:797px;top:254px;width:475px;height:16px;background:linear-gradient(#f1f0e6,#e8e6d8)"></div>
<div style="left:891px;top:255px;width:1px;height:14px;background:#cdcbbb"></div><div style="left:968px;top:255px;width:1px;height:14px;background:#cdcbbb"></div><div style="left:1045px;top:255px;width:1px;height:14px;background:#cdcbbb"></div>
<span class="t" style="left:802px;top:256px">Name</span><span class="t" style="left:898px;top:256px">Value</span><span class="t" style="left:975px;top:256px">Address</span>
<div style="left:797px;top:270px;width:248px;height:333px;background:#dde5d7;overflow:hidden">
<div style="left:0;top:16px;width:248px;height:1px;background:#eff3e9"></div><div style="left:0;top:33px;width:248px;height:1px;background:#eff3e9"></div><div style="left:0;top:50px;width:248px;height:1px;background:#eff3e9"></div><div style="left:0;top:68px;width:248px;height:1px;background:#eff3e9"></div><div style="left:0;top:85px;width:248px;height:1px;background:#eff3e9"></div><div style="left:0;top:102px;width:248px;height:1px;background:#eff3e9"></div><div style="left:0;top:119px;width:248px;height:1px;background:#eff3e9"></div><div style="left:0;top:136px;width:248px;height:1px;background:#eff3e9"></div><div style="left:0;top:154px;width:248px;height:1px;background:#eff3e9"></div><div style="left:0;top:171px;width:248px;height:1px;background:#eff3e9"></div><div style="left:0;top:188px;width:248px;height:1px;background:#eff3e9"></div><div style="left:0;top:205px;width:248px;height:1px;background:#eff3e9"></div><div style="left:0;top:222px;width:248px;height:1px;background:#eff3e9"></div><div style="left:0;top:240px;width:248px;height:1px;background:#eff3e9"></div><div style="left:0;top:257px;width:248px;height:1px;background:#eff3e9"></div><div style="left:0;top:274px;width:248px;height:1px;background:#eff3e9"></div><div style="left:0;top:291px;width:248px;height:1px;background:#eff3e9"></div><div style="left:0;top:309px;width:248px;height:1px;background:#eff3e9"></div><div style="left:0;top:326px;width:248px;height:1px;background:#eff3e9"></div>
<div style="left:94px;top:0;width:1px;height:333px;background:#eff3e9"></div><div style="left:171px;top:0;width:1px;height:333px;background:#eff3e9"></div>
<span class="tx" style="left:25px;top:1px">pa</span><span class="tx" style="left:103px;top:1px">0x00 E3</span><span class="tx" style="left:180px;top:1px">0x01E8</span>
<span class="tx" style="left:24px;top:18px">l</span><span class="tx" style="left:103px;top:18px">{...}</span><span class="tx" style="left:180px;top:18px">0x00C9</span>
<span class="tx" style="left:41px;top:35px">[0]</span><span class="tx" style="left:103px;top:35px">{...}</span><span class="tx" style="left:180px;top:35px">0x00C9</span>
<span class="tx" style="left:41px;top:53px">[1]</span><span class="tx" style="left:103px;top:53px">{...}</span><span class="tx" style="left:180px;top:53px">0x00E3</span>
<span class="tx" style="left:59px;top:70px">[0]</span><span class="tx" style="left:103px;top:70px">0x01</span><span class="tx" style="left:180px;top:70px">0x00E3</span>
<span class="tx" style="left:59px;top:87px">[1]</span><span class="tx" style="left:103px;top:87px">0x01</span><span class="tx" style="left:180px;top:87px">0x00E4</span>
<span class="tx" style="left:59px;top:104px">[2]</span><span class="tx" style="left:103px;top:104px">0x01</span><span class="tx" style="left:180px;top:104px">0x00E5</span>
<span class="tx" style="left:59px;top:121px">[3]</span><span class="tx" style="left:103px;top:121px">0x01</span><span class="tx" style="left:180px;top:121px">0x00E6</span>
<span class="tx" style="left:59px;top:139px">[4]</span><span class="tx" style="left:103px;top:139px">0x01</span><span class="tx" style="left:180px;top:139px">0x00E7</span>
<span class="tx" style="left:59px;top:156px">[5]</span><span class="tx" style="left:103px;top:156px">0x01</span><span class="tx" style="left:180px;top:156px">0x00E8</span>
<span class="tx" style="left:59px;top:173px">[6]</span><span class="tx" style="left:103px;top:173px">0x00</span><span class="tx" style="left:180px;top:173px">0x00E9</span>
<span class="tx" style="left:59px;top:190px">[7]</span><span class="tx" style="left:103px;top:190px">0x00</span><span class="tx" style="left:180px;top:190px">0x00EA</span>
<span class="tx" style="left:59px;top:207px">[8]</span><span class="tx" style="left:103px;top:207px">0x00</span><span class="tx" style="left:180px;top:207px">0x00EB</span>
<span class="tx" style="left:59px;top:225px">[9]</span><span class="tx" style="left:103px;top:225px">0x00</span><span class="tx" style="left:180px;top:225px">0x00EC</span>
<span class="tx" style="left:59px;top:242px">[10]</span><span class="tx" style="left:103px;top:242px">0x00</span><span class="tx" style="left:180px;top:242px">0x00ED</span>
<span class="tx" style="left:59px;top:259px">[11]</span><span class="tx" style="left:103px;top:259px">0x00</span><span class="tx" style="left:180px;top:259px">0x00EE</span>
<span class="tx" style="left:59px;top:276px">[12]</span><span class="tx" style="left:103px;top:276px">0x00</span><span class="tx" style="left:180px;top:276px">0x00EF</span>
<span class="tx" style="left:59px;top:293px">[13]</span><span class="tx" style="left:103px;top:293px">0x00</span><span class="tx" style="left:180px;top:293px">0x00F0</span>
<span class="tx" style="left:59px;top:311px">[14]</span><span class="tx" style="left:103px;top:311px">0x00</span><span class="tx" style="left:180px;top:311px">0x00F1</span>
<span class="tx" style="left:59px;top:328px">[15]</span><span class="tx" style="left:103px;top:328px">0x00</span><span class="tx" style="left:180px;top:328px">0x00F2</span>
<div style="left:4px;top:22px;width:9px;height:9px;border:1px solid #98a594;background:#f4f4ec;box-sizing:border-box;line-height:6px;text-align:center">−</div>
<div style="left:22px;top:39px;width:9px;height:9px;border:1px solid #98a594;background:#f4f4ec;box-sizing:border-box;line-height:6px;text-align:center">+</div>
<div style="left:22px;top:56px;width:9px;height:9px;border:1px solid #98a594;background:#f4f4ec;box-sizing:border-box;line-height:6px;text-align:center">−</div>
</div>
<div class="sb" style="left:1257px;top:272px"><svg><use href="#up"/></svg></div>
<div class="th" style="left:1257px;top:288px;width:14px;height:170px;background:#c4d5f9"></div>
<div class="sb" style="left:1257px;top:587px"><svg><use href="#dn"/></svg></div>
<span class="t" style="left:797px;top:611px">PC= 0x0009B4</span>
<div class="sep" style="left:891px;top:608px;height:16px"></div>
<span class="t" style="left:895px;top:611px">8.12 ms</span>
<div style="left:795px;top:625px;width:478px;height:2px;background:#a9b3bb"></div>
<div style="left:1015px;top:623px;width:37px;height:2px;border-top:2px dotted #555;box-sizing:border-box"></div>
<!-- watch clock -->
<div style="left:795px;top:628px;width:478px;height:20px;background:linear-gradient(#fff,#f4f3ea);border:1px solid #d5d3c3;box-sizing:border-box;border-radius:3px"></div>
<svg class="i" style="left:799px;top:631px;width:15px;height:15px"><use href="#wt"/></svg>
<span class="t" style="left:818px;top:632px">Watch Clock</span>
<svg style="position:absolute;left:1242px;top:632px" width="12" height="12"><use href="#pn"/></svg>
<div class="x" style="left:1256px;top:632px;background:#a06a80">×</div>
<div style="left:796px;top:648px;width:477px;height:190px;border:1px solid #dedbca;box-sizing:border-box;background:#ece8d7"></div>
<span class="t" style="left:879px;top:656px">Cycles:</span><span class="t" style="left:1009px;top:656px">Time:</span>
<span class="t" style="left:803px;top:675px;font-size:11px">Current Count:</span>
<span class="t" style="left:803px;top:707px">Delta:</span>
<span class="t" style="left:803px;top:735px">Stopwatch:</span>
<span class="t" style="left:803px;top:785px">Clock:</span>
<div class="e" style="left:879px;top:672px;width:123px;height:20px">32 460</div>
<div class="e" style="left:1009px;top:672px;width:124px;height:20px">8.12 ms</div>
<div class="e" style="left:879px;top:702px;width:123px;height:20px">28</div>
<div class="e" style="left:1009px;top:702px;width:124px;height:20px">7.00 us</div>
<div class="e" style="left:879px;top:731px;width:123px;height:20px">32 460</div>
<div class="e" style="left:1009px;top:731px;width:124px;height:20px">8.12 ms</div>
<div style="left:880px;top:754px;width:100px;height:19px;box-sizing:border-box;border:1px solid #1c3a5a;border-radius:3px;background:linear-gradient(#fff,#ecebe4);text-align:center;line-height:18px">Reset To <u>Z</u>ero</div>
<div class="e" style="left:879px;top:783px;width:123px;height:20px">16</div>
<span class="t" style="left:1009px;top:787px">MHz</span>

<!-- status bar -->
<div style="left:4px;top:839px;width:1272px;height:18px;background:linear-gradient(#f6f5ee,#e6e3d3);border-top:1px solid #bdbcae;box-sizing:border-box"></div>
<div style="left:100px;top:840px;width:1px;height:16px;background:#fff"></div><div style="left:147px;top:840px;width:1px;height:16px;background:#fff"></div><div style="left:300px;top:840px;width:1px;height:16px;background:#fff"></div><div style="left:453px;top:840px;width:1px;height:16px;background:#fff"></div><div style="left:936px;top:840px;width:1px;height:16px;background:#fff"></div>
<span class="t" style="left:9px;top:842px">264: 1</span><span class="t" style="left:103px;top:842px">Insert</span><span class="t" style="left:304px;top:842px">Compiled</span><span class="t" style="left:457px;top:842px">c:\users\Zsolt\temp\ledkockanagy\ledkockanagy.c</span>
<svg style="position:absolute;left:1264px;top:843px" width="12" height="12"><path d="M9 1h2v2H9zM6 5h2v2H6zM9 5h2v2H9zM3 9h2v2H3zM6 9h2v2H6zM9 9h2v2H9z" fill="#c5c2b0"/></svg>
</body></html>
